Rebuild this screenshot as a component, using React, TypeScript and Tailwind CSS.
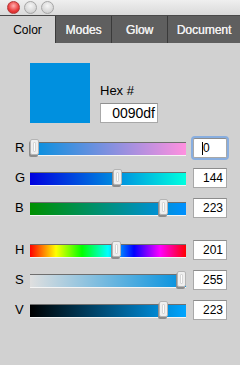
import React from "react";

type Row = { label: string; value: number; max: number; grad: string; focus?: boolean };

const rgbRows: Row[] = [
  { label: "R", value: 0, max: 255, grad: "bg-[linear-gradient(to_right,#0090df,#ff90df)]", focus: true },
  { label: "G", value: 144, max: 255, grad: "bg-[linear-gradient(to_right,#0000df,#00ffdf)]" },
  { label: "B", value: 223, max: 255, grad: "bg-[linear-gradient(to_right,#009000,#0090ff)]" },
];

const hsvRows: Row[] = [
  {
    label: "H",
    value: 201,
    max: 360,
    grad: "bg-[linear-gradient(to_right,#ff0000,#ffff00,#00ff00,#00ffff,#0000ff,#ff00ff,#ff0000)]",
  },
  { label: "S", value: 255, max: 255, grad: "bg-[linear-gradient(to_right,#dfdfdf,#0090df)]" },
  { label: "V", value: 223, max: 255, grad: "bg-[linear-gradient(to_right,#000000,#00a5ff)]" },
];

function Slider({ row }: { row: Row }) {
  const left = Math.round((row.value / row.max) * 147);
  return (
    <div className="flex items-center h-[20px]">
      <div className="w-[30px] pl-[15px] text-[13px] leading-[16px] text-black">{row.label}</div>
      <div
        className={`relative w-[156px] h-[13px] border-t border-[#6f6f6f] shadow-[0_1px_0_#f5f5f5] ${row.grad}`}
      >
        <div
          className="absolute top-[-4px] w-[9px] h-[16px] rounded-[2px] border border-[#b4b4b4] bg-[#efefef] shadow-[-1px_2px_0_#8c8c8c] p-[2px]"
          style={{ left }}
        >
          <div className="w-full h-full border border-[#d6d6d6] bg-white rounded-[1px]" />
        </div>
      </div>
      <div
        className={`ml-[7px] w-[34px] h-[20px] bg-white border border-[#a8a8a8] border-t-[#8c8c8c] text-[12px] leading-[18px] text-black flex items-center ${
          row.focus ? "shadow-[0_0_0_2px_#88aee0] rounded-[2px] pl-[8px]" : "justify-end pr-[3px]"
        }`}
      >
        {row.focus && <span className="w-[1px] h-[13px] bg-black" />}
        <span>{row.value}</span>
      </div>
    </div>
  );
}

export default function App() {
  return (
    <div className="w-[240px] h-[365px] bg-[#d1d1d1] flex flex-col overflow-hidden font-['Liberation_Sans',Arial,sans-serif]">
      <div className="h-[16px] shrink-0 border-b border-[#4a4a4a] bg-gradient-to-b from-[#efefef] to-[#dadada] flex items-center gap-[4px] pl-[7px]">
        <div className="w-[13px] h-[13px] rounded-full border border-[#b23a3a] bg-[radial-gradient(circle_at_50%_35%,#ffb0b0,#e83a3a_60%,#c42020)]" />
        <div className="w-[13px] h-[13px] rounded-full border border-[#a6a6a6] bg-[radial-gradient(circle_at_50%_35%,#f6f6f6,#d4d4d4_70%,#bdbdbd)]" />
        <div className="w-[13px] h-[13px] rounded-full border border-[#a6a6a6] bg-[radial-gradient(circle_at_50%_35%,#f6f6f6,#d4d4d4_70%,#bdbdbd)]" />
      </div>
      <div className="h-[27px] shrink-0 flex text-[12px]">
        <div className="w-[55px] flex items-center justify-center text-black">Color</div>
        <div className="w-[56px] flex items-center justify-center bg-[#5f5f5f] border-l border-[#3a3a3a] text-[#f0f0f0] [text-shadow:0.3px_0_0_#f0f0f0]">
          Modes
        </div>
        <div className="w-[56px] flex items-center justify-center bg-[#5f5f5f] border-l border-[#3a3a3a] text-[#f0f0f0] [text-shadow:0.3px_0_0_#f0f0f0]">
          Glow
        </div>
        <div className="flex-1 flex items-center justify-center bg-[#5f5f5f] border-l border-[#3a3a3a] text-[#f0f0f0] [text-shadow:0.3px_0_0_#f0f0f0]">
          Document
        </div>
      </div>
      <div className="pt-[20px]">
        <div className="flex items-end pl-[30px] gap-[10px]">
          <div className="w-[60px] h-[60px] bg-[#0090df]" />
          <div className="flex flex-col">
            <div className="text-[13px] leading-[16px] text-black mb-[4px]">Hex #</div>
            <div className="w-[58px] h-[20px] bg-white border border-[#a8a8a8] border-t-[#909090] text-[14px] leading-[18px] text-black text-right pr-[2px]">
              0090df
            </div>
          </div>
        </div>
        <div className="mt-[15px] flex flex-col gap-[10px]">
          {rgbRows.map((r) => (
            <Slider key={r.label} row={r} />
          ))}
        </div>
        <div className="mt-[22px] flex flex-col gap-[10px]">
          {hsvRows.map((r) => (
            <Slider key={r.label} row={r} />
          ))}
        </div>
      </div>
    </div>
  );
}
